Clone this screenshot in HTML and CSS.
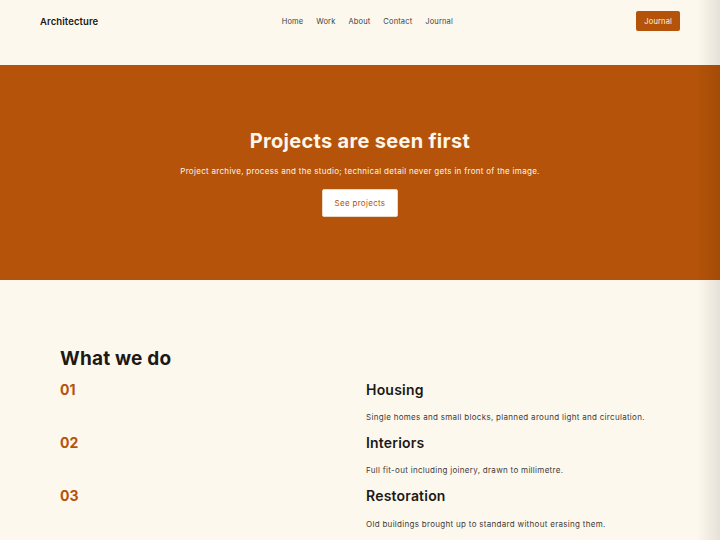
FILE: index.html
```html
<!DOCTYPE html>
<html lang="en">
<head>
  <meta charset="UTF-8">
  <meta name="viewport" content="width=device-width, initial-scale=1">
  <title>Architecture</title>
  <link rel="stylesheet" href="styles.css">
</head>
<body>

<header class="site-header">
  <a class="brand" href="#">Architecture</a>
  <nav class="main-nav">
    <a href="#">Home</a>
    <a href="#">Work</a>
    <a href="#">About</a>
    <a href="#">Contact</a>
    <a href="#">Journal</a>
  </nav>
  <a class="header-btn" href="#">Journal</a>
</header>

<section class="hero">
  <h1>Projects are seen first</h1>
  <p>Project archive, process and the studio; technical detail never gets in front of the image.</p>
  <a class="hero-btn" href="#">See projects</a>
</section>

<section class="services">
  <h2>What we do</h2>
  <div class="service-list">
    <div class="service-num">01</div>
    <div class="service-body">
      <h3>Housing</h3>
      <p>Single homes and small blocks, planned around light and circulation.</p>
    </div>
    <div class="service-num">02</div>
    <div class="service-body">
      <h3>Interiors</h3>
      <p>Full fit-out including joinery, drawn to millimetre.</p>
    </div>
    <div class="service-num">03</div>
    <div class="service-body">
      <h3>Restoration</h3>
      <p>Old buildings brought up to standard without erasing them.</p>
    </div>
  </div>
</section>

<div class="edge-shade"></div>

</body>
</html>
```

FILE: styles.css
```css
* {
  box-sizing: border-box;
}

body {
  margin: 0;
  font-family: Inter, 'Liberation Sans', sans-serif;
  background: #fdf8ee;
  color: #1c1917;
  min-height: 100vh;
}

a {
  text-decoration: none;
}

/* Header */
.site-header {
  display: flex;
  justify-content: space-between;
  align-items: center;
  height: 65px;
  padding: 0 40px 23px;
}

.brand {
  color: #1c1917;
  font-size: 9.5px;
  font-weight: 600;
  letter-spacing: 0.1px;
}

.main-nav {
  display: flex;
  gap: 13px;
}

.main-nav a {
  color: #44403c;
  font-size: 7.5px;
  letter-spacing: 0.15px;
}

.header-btn {
  background: #b45309;
  color: #fdf3e3;
  font-size: 7.5px;
  letter-spacing: 0.15px;
  padding: 5.5px 8px;
  border-radius: 2px;
}

/* Hero */
.hero {
  background: #b45309;
  height: 215px;
  display: flex;
  flex-direction: column;
  align-items: center;
  justify-content: center;
  text-align: center;
  color: #fdf6e9;
}

.hero h1 {
  margin: 0 0 12px;
  font-size: 20px;
  font-weight: 700;
  line-height: 1.2;
  letter-spacing: 0.3px;
}

.hero p {
  margin: 0 0 12px;
  font-size: 8px;
  line-height: 1.5;
  letter-spacing: 0.3px;
}

.hero-btn {
  display: inline-block;
  background: #fff;
  color: #b45309;
  font-size: 8px;
  letter-spacing: 0.3px;
  padding: 8px 12px;
  border-radius: 2px;
  border: 1px solid #e8d9c4;
}

/* Services */
.services {
  padding: 68px 60px 0;
}

.services h2 {
  margin: 0 0 11px;
  font-size: 19px;
  font-weight: 700;
  line-height: 1.2;
  letter-spacing: 0.2px;
}

.service-list {
  display: grid;
  grid-template-columns: 1fr 1fr;
  column-gap: 12px;
  row-gap: 12px;
}

.service-num {
  color: #b45309;
  font-size: 14px;
  font-weight: 700;
  line-height: 1.2;
}

.service-body h3 {
  margin: 0 0 12.5px;
  font-size: 14px;
  font-weight: 600;
  line-height: 1.2;
  letter-spacing: 0.2px;
}

.service-body p {
  margin: 0;
  font-size: 8px;
  line-height: 1.5;
  letter-spacing: 0.3px;
  color: #3f3a36;
}

/* soft shade along the right edge of the viewport */
.edge-shade {
  position: fixed;
  top: 0;
  right: 0;
  width: 22px;
  height: 100%;
  background: linear-gradient(to right, rgba(0, 0, 0, 0), rgba(0, 0, 0, 0.09));
  pointer-events: none;
}
```
